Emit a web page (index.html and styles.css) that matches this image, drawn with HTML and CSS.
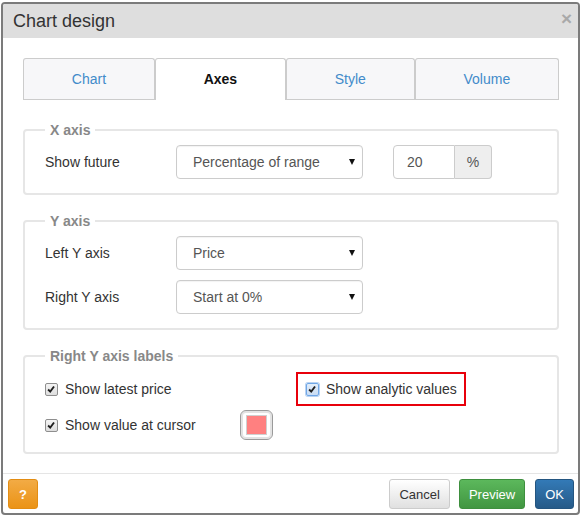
FILE: index.html
```html
<!DOCTYPE html>
<html>
<head>
<meta charset="utf-8">
<link rel="stylesheet" href="styles.css">
</head>
<body>
<div class="dialog">
  <div class="header">
    <span class="title">Chart design</span>
    <span class="close">×</span>
  </div>
  <div class="content">
    <div class="tabs">
      <div class="tab">Chart</div>
      <div class="tab active">Axes</div>
      <div class="tab">Style</div>
      <div class="tab">Volume</div>
    </div>

    <fieldset class="group first">
      <legend>X axis</legend>
      <div class="row">
        <span class="label">Show future</span>
        <div class="select"><span>Percentage of range</span><i class="arrow"></i></div>
        <div class="input-group">
          <span class="input">20</span>
          <span class="addon">%</span>
        </div>
      </div>
    </fieldset>

    <fieldset class="group">
      <legend>Y axis</legend>
      <div class="row">
        <span class="label">Left Y axis</span>
        <div class="select"><span>Price</span><i class="arrow"></i></div>
      </div>
      <div class="row">
        <span class="label">Right Y axis</span>
        <div class="select"><span>Start at 0%</span><i class="arrow"></i></div>
      </div>
    </fieldset>

    <fieldset class="group">
      <legend>Right Y axis labels</legend>
      <div class="checks">
        <label class="check c1"><span class="box"><svg viewBox="0 0 13 13" width="11" height="11"><path d="M2.5 6.5 L5 9 L9.5 3" fill="none" stroke="#1e1e1e" stroke-width="2.2"/></svg></span>Show latest price</label>
        <div class="highlight">
          <label class="check"><span class="box focus"><svg viewBox="0 0 13 13" width="11" height="11"><path d="M2.5 6.5 L5 9 L9.5 3" fill="none" stroke="#1e1e1e" stroke-width="2.2"/></svg></span>Show analytic values</label>
        </div>
        <label class="check c1"><span class="box"><svg viewBox="0 0 13 13" width="11" height="11"><path d="M2.5 6.5 L5 9 L9.5 3" fill="none" stroke="#1e1e1e" stroke-width="2.2"/></svg></span>Show value at cursor</label>
        <div class="swatch"><span class="color"></span></div>
      </div>
    </fieldset>
  </div>
  <div class="footer">
    <button class="btn help">?</button>
    <div class="spacer"></div>
    <button class="btn cancel">Cancel</button>
    <button class="btn preview">Preview</button>
    <button class="btn ok">OK</button>
  </div>
</div>
</body>
</html>
```

FILE: styles.css
```css
* { box-sizing: border-box; }
html, body { margin: 0; padding: 0; background: #ffffff; }
body {
  font-family: "Liberation Sans", Arial, sans-serif;
  font-size: 14px;
  color: #333;
}
.dialog {
  margin: 2px 0 0 1px;
  width: 579px;
  border: 2px solid #7b7b7b;
  border-radius: 4px;
  background: #fff;
  overflow: hidden;
}
.header {
  height: 34px;
  background: #dedede;
  display: flex;
  align-items: center;
  justify-content: space-between;
  padding: 0 6px 0 10px;
}
.title { font-size: 18px; color: #333; }
.close {
  font-size: 19px;
  font-weight: bold;
  color: #a9a9a9;
  line-height: 1;
  margin-top: -6px;
}
.content { padding: 20px 19px 0 20px; }
.tabs {
  display: flex;
  border-bottom: 1px solid #ccc;
  height: 42px;
}
.tab {
  flex: 1 1 auto;
  text-align: center;
  line-height: 40px;
  border: 1px solid #ccc;
  border-bottom: none;
  border-radius: 3px 3px 0 0;
  background: #f7f7f9;
  color: #428bca;
}
.tab.active {
  background: #fff;
  color: #111;
  font-weight: bold;
  height: 42px;
  margin-bottom: -1px;
}
.group {
  margin: 17px 0 0 0;
  border: 2px solid #e6e6e6;
  border-radius: 4px;
  padding: 6px 20px 14px 20px;
}
.group.first { margin-top: 21px; }
.group legend {
  font-weight: bold;
  color: #888;
  line-height: 18px;
  padding: 0 5px;
  margin-left: 0;
}
.row {
  display: flex;
  align-items: center;
  height: 34px;
}
.row + .row { margin-top: 10px; }
.label { width: 131px; }
.select {
  width: 187px;
  height: 34px;
  border: 1px solid #ccc;
  border-radius: 4px;
  display: flex;
  align-items: center;
  justify-content: space-between;
  padding: 0 7px 0 16px;
  color: #555;
  box-shadow: inset 0 1px 1px rgba(0,0,0,0.05);
}
.arrow {
  width: 0;
  height: 0;
  border-left: 3.5px solid transparent;
  border-right: 3.5px solid transparent;
  border-top: 6px solid #111;
}
.input-group {
  display: flex;
  margin-left: 30px;
  height: 34px;
}
.input {
  width: 62px;
  border: 1px solid #ccc;
  border-radius: 4px 0 0 4px;
  padding-left: 13px;
  line-height: 32px;
  color: #555;
}
.addon {
  width: 37px;
  border: 1px solid #ccc;
  border-left: none;
  border-radius: 0 4px 4px 0;
  background: #eee;
  text-align: center;
  line-height: 32px;
  color: #555;
}
.checks {
  display: grid;
  grid-template-columns: 195px 56px auto;
  grid-template-rows: 34px 34px;
  row-gap: 2px;
  align-items: center;
  padding-top: 1px;
  margin-bottom: -4px;
}
.check {
  display: flex;
  align-items: center;
  gap: 7px;
}
.c1 { grid-column: 1; }
.highlight {
  grid-column: 3;
  grid-row: 1;
  width: 170px;
  height: 34px;
  border: 2px solid #e8000b;
  display: flex;
  align-items: center;
  padding-left: 8px;
}
.box {
  width: 13px;
  height: 13px;
  border: 1px solid #8e8e8e;
  border-radius: 2px;
  background: linear-gradient(#f4f4f4, #dedede);
  display: flex;
  align-items: center;
  justify-content: center;
}
.box.focus {
  border-color: #6fa6e6;
  background: linear-gradient(#e3eefa, #c9dcf3);
  box-shadow: 0 0 0 1px #b9d3f2;
}
.swatch {
  grid-column: 2;
  grid-row: 2;
  width: 33px;
  height: 30px;
  border: 1px solid #9a9a9a;
  border-radius: 6px;
  box-shadow: inset 0 0 0 2px #e3e3e3;
  display: flex;
  align-items: center;
  justify-content: center;
}
.color {
  width: 21px;
  height: 20px;
  background: #ff8080;
  border: 1px solid #d0d0d0;
}
.footer {
  margin-top: 19px;
  border-top: 1px solid #e5e5e5;
  display: flex;
  align-items: center;
  padding: 5px 4px 4px 5px;
  gap: 8px;
}
.spacer { flex: 1; }
.btn {
  height: 30px;
  border-radius: 3px;
  font-family: "Liberation Sans", Arial, sans-serif;
  font-size: 13px;
  padding: 0 9px;
  border: 1px solid #ccc;
  cursor: pointer;
}
.help {
  width: 30px;
  padding: 0;
  color: #fff;
  font-weight: bold;
  background: linear-gradient(#f2ab45, #eb9316);
  border-color: #e38d13;
}
.cancel {
  color: #333;
  background: linear-gradient(#fff, #e0e0e0);
  border-color: #ccc;
}
.preview {
  color: #fff;
  background: linear-gradient(#5cb85c, #419641);
  border-color: #3e8f3e;
  margin-left: 1px;
}
.ok {
  color: #fff;
  background: linear-gradient(#337ab7, #265a88);
  border-color: #245580;
  margin-left: 2px;
}
```
